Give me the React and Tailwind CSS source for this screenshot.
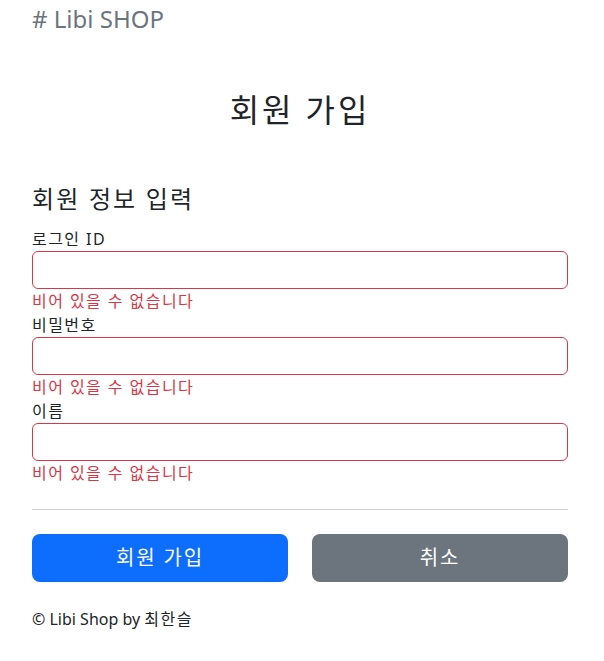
export default function App() {
  const font = { fontFamily: '"Noto Sans", "Noto Sans CJK KR", sans-serif' };
  const Field = ({ label }) => (
    <div className="flex flex-col">
      <label className="text-[16px] leading-[24px] h-[24px] text-[#212529] tracking-[0.09em]">{label}</label>
      <input className="h-[38px] w-full rounded-[6px] border border-[#dc3545] bg-white px-3 outline-none" />
      <div className="text-[16px] leading-[24px] h-[24px] text-[#dc3545] tracking-[0.09em]">비어 있을 수 없습니다</div>
    </div>
  );
  return (
    <div className="min-h-[661px] bg-white pl-[32px] pr-[36px] text-[#212529]" style={font}>
      <div className="pt-[4px] text-[24px] leading-[29px] text-[#6c757d]"># Libi SHOP</div>
      <h2 className="mt-[58px] text-center text-[32px] leading-[38px] tracking-[0.09em]">회원 가입</h2>
      <h4 className="mt-[55px] text-[24px] leading-[29px] tracking-[0.09em]">회원 정보 입력</h4>
      <div className="mt-[14px] flex flex-col">
        <Field label="로그인 ID" />
        <Field label="비밀번호" />
        <Field label="이름" />
      </div>
      <hr className="mt-[24px] border-0 border-t border-[#cfcfcf]" />
      <div className="mt-[24px] grid grid-cols-2 gap-[24px]">
        <button className="h-[48px] rounded-[8px] bg-[#0d6efd] text-[20px] text-white tracking-[0.09em]">회원 가입</button>
        <button className="h-[48px] rounded-[8px] bg-[#6c757d] text-[20px] text-white tracking-[0.09em]">취소</button>
      </div>
      <div className="mt-[25px] text-[16px] leading-[24px]">© Libi Shop by <span className="tracking-[0.09em]">최한슬</span></div>
    </div>
  );
}
